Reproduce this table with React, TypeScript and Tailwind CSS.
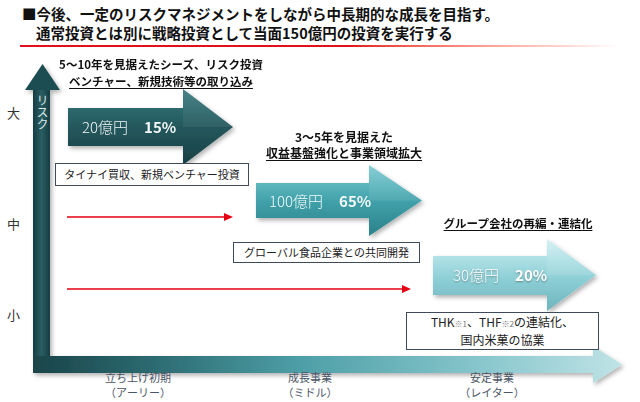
import React from "react";

const jp = "font-['Noto_Sans_CJK_JP','Noto_Sans',sans-serif]";

function Diagram() {
  return (
    <svg
      className="absolute left-0 top-0"
      width={640}
      height={402}
      viewBox="0 0 640 402"
    >
      <defs>
        <linearGradient id="vAxis" x1="0" y1="0" x2="1" y2="0">
          <stop offset="0" stopColor="#163d42" />
          <stop offset="0.5" stopColor="#295e63" />
          <stop offset="1" stopColor="#163d42" />
        </linearGradient>
        <linearGradient id="hAxis" gradientUnits="userSpaceOnUse" x1="33" y1="0" x2="622" y2="0">
          <stop offset="0" stopColor="#1a4449" />
          <stop offset="0.2" stopColor="#2b6a70" />
          <stop offset="0.45" stopColor="#4d9ea6" />
          <stop offset="0.75" stopColor="#85c5cb" />
          <stop offset="1" stopColor="#bfe3e6" />
        </linearGradient>
        <linearGradient id="a1" x1="0" y1="0" x2="0" y2="1">
          <stop offset="0" stopColor="#3d7c81" />
          <stop offset="0.28" stopColor="#2c676c" />
          <stop offset="0.5" stopColor="#24585d" />
          <stop offset="1" stopColor="#173f43" />
        </linearGradient>
        <linearGradient id="a2" x1="0" y1="0" x2="0" y2="1">
          <stop offset="0" stopColor="#7ecbd2" />
          <stop offset="0.28" stopColor="#5bb5bd" />
          <stop offset="0.55" stopColor="#3e9ea7" />
          <stop offset="1" stopColor="#2b818a" />
        </linearGradient>
        <linearGradient id="a3" x1="0" y1="0" x2="0" y2="1">
          <stop offset="0" stopColor="#d3eff2" />
          <stop offset="0.28" stopColor="#ade0e5" />
          <stop offset="0.55" stopColor="#8ecfd6" />
          <stop offset="1" stopColor="#6db4bc" />
        </linearGradient>
        <filter id="sh" x="-10%" y="-10%" width="130%" height="140%">
          <feDropShadow dx="2" dy="2.5" stdDeviation="2" floodColor="#000" floodOpacity="0.3" />
        </filter>
      </defs>

      {/* axes */}
      <g filter="url(#sh)">
        <rect x="33" y="88" width="17" height="285" fill="url(#vAxis)" />
        <polygon points="25,90 42.5,64 60,90" fill="#1f4d52" />
        <rect x="33" y="356" width="561" height="17" fill="url(#hAxis)" />
        <polygon points="593,346 622,364.5 593,383" fill="url(#hAxis)" />
      </g>

      {/* big arrows */}
      <g filter="url(#sh)">
        <polygon points="68,108 183,108 183,89 233,127 183,165 183,146 68,146" fill="url(#a1)" />
        <polygon points="183,89 233,127 183,127" fill="#ffffff" opacity="0.06" />
        <polygon points="256,183 369,183 369,165 422,200.5 369,236 369,218 256,218" fill="url(#a2)" />
        <polygon points="369,165 422,200.5 369,200.5" fill="#ffffff" opacity="0.08" />
        <polygon points="433,256 547,256 547,239 596,275 547,311 547,295 433,295" fill="url(#a3)" />
        <polygon points="547,239 596,275 547,275" fill="#ffffff" opacity="0.1" />
      </g>

      {/* red arrows */}
      <line x1="67" y1="217" x2="226" y2="217" stroke="#e50012" strokeWidth="1.6" />
      <polygon points="224,213 233,217 224,221" fill="#e50012" />
      <line x1="67" y1="289" x2="404" y2="289" stroke="#e50012" strokeWidth="1.6" />
      <polygon points="402,285 411,289 402,293" fill="#e50012" />
    </svg>
  );
}

function ArrowLabel({ amount, pct, className }: { amount: string; pct: string; className: string }) {
  return (
    <div className={`absolute flex items-baseline gap-[16px] text-[15px] leading-[22px] ${className}`}>
      <span className="font-light">{amount}</span>
      <span className="font-bold">{pct}</span>
    </div>
  );
}

function AxisLabel({ main, sub }: { main: string; sub: string }) {
  return (
    <div className="flex w-[120px] flex-col items-center">
      <div>{main}</div>
      <div>{sub}</div>
    </div>
  );
}

export default function App() {
  return (
    <div className={`relative w-[640px] h-[402px] overflow-hidden bg-white ${jp}`}>
      <Diagram />

      {/* Title */}
      <div className="relative flex flex-col pl-[22px] pt-[4px] text-[14.5px] font-bold leading-[19px] text-[#111]">
        <div>■今後、一定のリスクマネジメントをしながら中長期的な成長を目指す。</div>
        <div className="pl-[14px]">通常投資とは別に戦略投資として当面150億円の投資を実行する</div>
      </div>
      <div className="relative ml-[20px] mt-[3px] h-[2px] w-[600px] bg-linear-to-r from-[#e3101b] via-[#e3101b] via-55% to-white" />

      {/* Y-axis labels */}
      <div className="absolute left-[7px] top-[104px] text-[13px] leading-[18px] text-[#333]">大</div>
      <div className="absolute left-[7px] top-[215px] text-[13px] leading-[18px] text-[#333]">中</div>
      <div className="absolute left-[7px] top-[306px] text-[13px] leading-[18px] text-[#333]">小</div>
      <div className="absolute left-[34px] top-[94px] w-[16px] text-[12px] leading-[16px] text-[#dce8ea] [writing-mode:vertical-rl]">
        リスク
      </div>

      {/* Headers */}
      <div className="absolute left-[41px] top-[56px] flex w-[240px] flex-col items-center text-[11.5px] font-bold leading-[17px] text-[#111]">
        <div>5〜10年を見据えたシーズ、リスク投資</div>
        <div className="underline decoration-1 underline-offset-2">ベンチャー、新規技術等の取り込み</div>
      </div>
      <div className="absolute left-[244px] top-[129px] flex w-[200px] flex-col items-center text-[12px] font-bold leading-[16px] text-[#111]">
        <div>3〜5年を見据えた</div>
        <div className="underline decoration-1 underline-offset-2">収益基盤強化と事業領域拡大</div>
      </div>
      <div className="absolute left-[418px] top-[215px] w-[200px] text-center text-[11.5px] font-bold leading-[16px] text-[#111]">
        <span className="underline decoration-1 underline-offset-2">グループ会社の再編・連結化</span>
      </div>

      {/* Arrow texts */}
      <ArrowLabel amount="20億円" pct="15%" className="left-[82px] top-[116px] text-[#f2f7f7]" />
      <ArrowLabel amount="100億円" pct="65%" className="left-[269px] top-[190px] text-[#f4fafa]" />
      <ArrowLabel
        amount="30億円"
        pct="20%"
        className="left-[453px] top-[264px] text-white [text-shadow:0_1px_2px_rgba(0,0,0,0.35)]"
      />

      {/* Boxes */}
      <div className="absolute left-[55px] top-[163px] flex h-[23px] w-[194px] items-center justify-center border border-[#3f4b5b] bg-white text-[11px] text-[#222]">
        タイナイ買収、新規ベンチャー投資
      </div>
      <div className="absolute left-[233px] top-[242px] flex h-[21px] w-[187px] items-center justify-center border border-[#3f4b5b] bg-white text-[11px] text-[#222]">
        グローバル食品企業との共同開発
      </div>
      <div className="absolute left-[406px] top-[312px] flex h-[38px] w-[193px] flex-col items-center justify-center border border-[#3f4b5b] bg-white text-[12px] leading-[16px] text-[#222]">
        <div>
          THK<span className="text-[8px] text-[#777]">※1</span>、THF<span className="text-[8px] text-[#777]">※2</span>の連結化、
        </div>
        <div>国内米菓の協業</div>
      </div>

      {/* X-axis labels */}
      <div className="absolute left-[78px] top-[370px] flex text-[11px] leading-[15px] text-[#4a5666]">
        <AxisLabel main="立ち上げ初期" sub="（アーリー）" />
        <div className="w-[52px]" />
        <AxisLabel main="成長事業" sub="（ミドル）" />
        <div className="w-[62px]" />
        <AxisLabel main="安定事業" sub="（レイター）" />
      </div>
    </div>
  );
}
